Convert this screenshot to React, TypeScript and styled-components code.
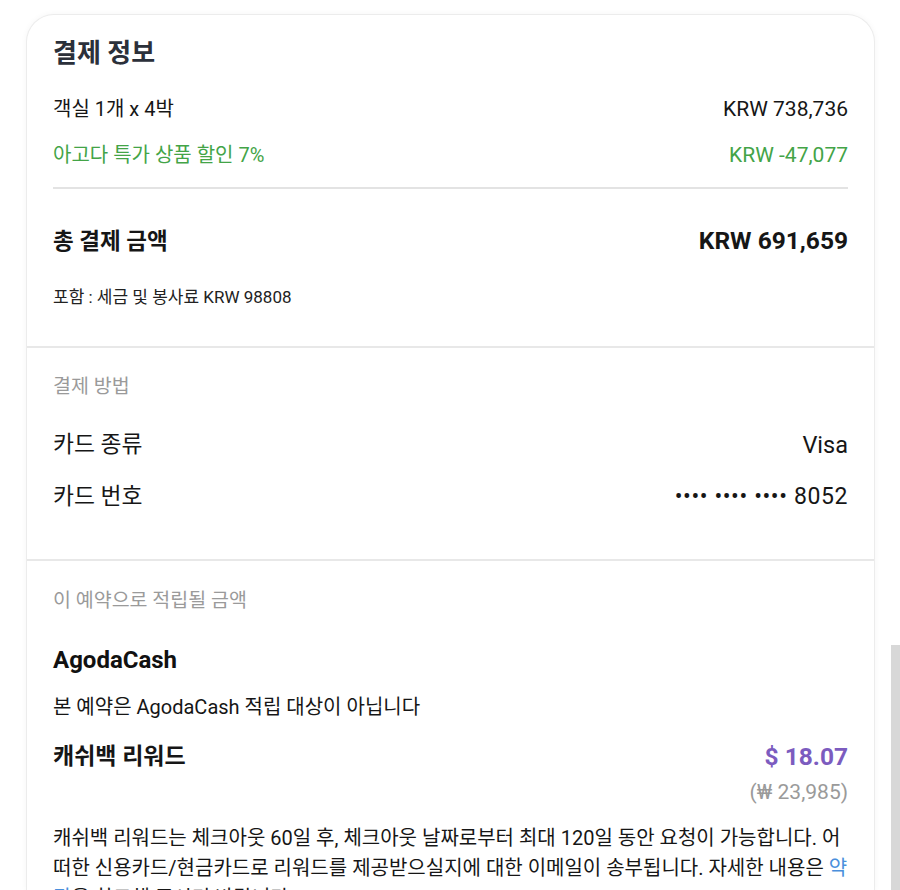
import styled, { createGlobalStyle } from 'styled-components';

const GlobalStyle = createGlobalStyle`
  html, body {
    margin: 0;
    padding: 0;
    background: #ffffff;
    overflow: hidden;
  }
  body {
    font-family: 'Roboto', 'Noto Sans CJK KR', sans-serif;
    color: #161616;
  }
`;

const Page = styled.div`
  height: 890px;
  padding: 14px 25px 0 26px;
  box-sizing: border-box;
`;

const Card = styled.div`
  background: #ffffff;
  border: 1px solid #ececec;
  border-bottom: none;
  border-radius: 28px 28px 0 0;
  box-shadow: 0 0 6px rgba(0, 0, 0, 0.04);
  height: 100%;
  overflow: hidden;
`;

const Section = styled.section<{ $top: number; $bottom: number; $last?: boolean }>`
  padding: ${(p) => p.$top}px 26px ${(p) => p.$bottom}px 26px;
  border-bottom: ${(p) => (p.$last ? 'none' : '2px solid #e8e8e8')};
`;

const Title = styled.h2`
  margin: 0;
  font-size: 26px;
  line-height: 32px;
  font-weight: 700;
  color: #2b303a;
`;

const Row = styled.div<{ $mt: number; $lh?: number }>`
  display: flex;
  justify-content: space-between;
  align-items: flex-start;
  margin-top: ${(p) => p.$mt}px;
  line-height: ${(p) => p.$lh ?? 28}px;
`;

const Cell = styled.span<{ $size: number; $bold?: boolean; $color?: string }>`
  font-size: ${(p) => p.$size}px;
  font-weight: ${(p) => (p.$bold ? 700 : 400)};
  color: ${(p) => p.$color ?? '#161616'};
`;

const Masked = styled.span`
  font-size: 23px;
  color: #161616;
  letter-spacing: 0.6px;
`;

const Divider = styled.hr`
  margin: 18px 0 0;
  border: none;
  height: 2px;
  background: #e3e3e3;
`;

const Note = styled.div`
  margin-top: 30px;
  font-size: 17px;
  line-height: 22px;
  color: #222;
`;

const Caption = styled.div`
  font-size: 19.5px;
  line-height: 24px;
  color: #9a9a9a;
`;

const SubTitle = styled.div<{ $mt: number }>`
  margin-top: ${(p) => p.$mt}px;
  font-size: 24px;
  line-height: 30px;
  font-weight: 700;
  color: #111;
`;

const Body = styled.div<{ $mt: number }>`
  margin-top: ${(p) => p.$mt}px;
  font-size: 20px;
  line-height: 28px;
  color: #161616;
`;

const Amounts = styled.div`
  display: flex;
  flex-direction: column;
  align-items: flex-end;
`;

const Reward = styled.span`
  font-size: 24.5px;
  line-height: 30px;
  font-weight: 700;
  color: #7c5cbf;
`;

const Converted = styled.span`
  margin-top: 7px;
  font-size: 21px;
  line-height: 26px;
  color: #9a9a9a;
`;

const Paragraph = styled.p`
  margin: 18px 0 0;
  font-size: 20px;
  line-height: 30px;
  color: #161616;
  word-break: break-all;
`;

const Link = styled.a`
  color: #4a8fdc;
  text-decoration: none;
`;

const ScrollThumb = styled.div`
  position: fixed;
  right: 0;
  top: 645px;
  bottom: 0;
  width: 9px;
  background: #d8d8d8;
`;

export default function App() {
  return (
    <>
      <GlobalStyle />
      <Page>
        <Card>
          <Section $top={22} $bottom={38}>
            <Title>결제 정보</Title>
            <Row $mt={26}>
              <Cell $size={20}>객실 1개 x 4박</Cell>
              <Cell $size={21}>KRW 738,736</Cell>
            </Row>
            <Row $mt={18}>
              <Cell $size={20} $color="#43a447">아고다 특가 상품 할인 7%</Cell>
              <Cell $size={21} $color="#43a447">KRW -47,077</Cell>
            </Row>
            <Divider />
            <Row $mt={37} $lh={30}>
              <Cell $size={22.5} $bold>총 결제 금액</Cell>
              <Cell $size={24.5} $bold>KRW 691,659</Cell>
            </Row>
            <Note>포함 : 세금 및 봉사료 KRW 98808</Note>
          </Section>

          <Section $top={27} $bottom={47}>
            <Caption>결제 방법</Caption>
            <Row $mt={31} $lh={30}>
              <Cell $size={22.8}>카드 종류</Cell>
              <Cell $size={23.5}>Visa</Cell>
            </Row>
            <Row $mt={22} $lh={30}>
              <Cell $size={22.8}>카드 번호</Cell>
              <Masked>•••• •••• •••• 8052</Masked>
            </Row>
          </Section>

          <Section $top={28} $bottom={0} $last>
            <Caption>이 예약으로 적립될 금액</Caption>
            <SubTitle $mt={32}>AgodaCash</SubTitle>
            <Body $mt={18}>본 예약은 AgodaCash 적립 대상이 아닙니다</Body>
            <Row $mt={21} $lh={30}>
              <Cell $size={23} $bold>캐쉬백 리워드</Cell>
              <Amounts>
                <Reward>$ 18.07</Reward>
                <Converted>(₩ 23,985)</Converted>
              </Amounts>
            </Row>
            <Paragraph>
              캐쉬백 리워드는 체크아웃 60일 후, 체크아웃 날짜로부터 최대 120일 동안 요청이 가능합니다. 어떠한 신용카드/현금카드로 리워드를 제공받으실지에 대한 이메일이 송부됩니다. 자세한 내용은 <Link href="#">약관</Link>을 참고해 주시기 바랍니다.
            </Paragraph>
          </Section>
        </Card>
      </Page>
      <ScrollThumb />
    </>
  );
}
